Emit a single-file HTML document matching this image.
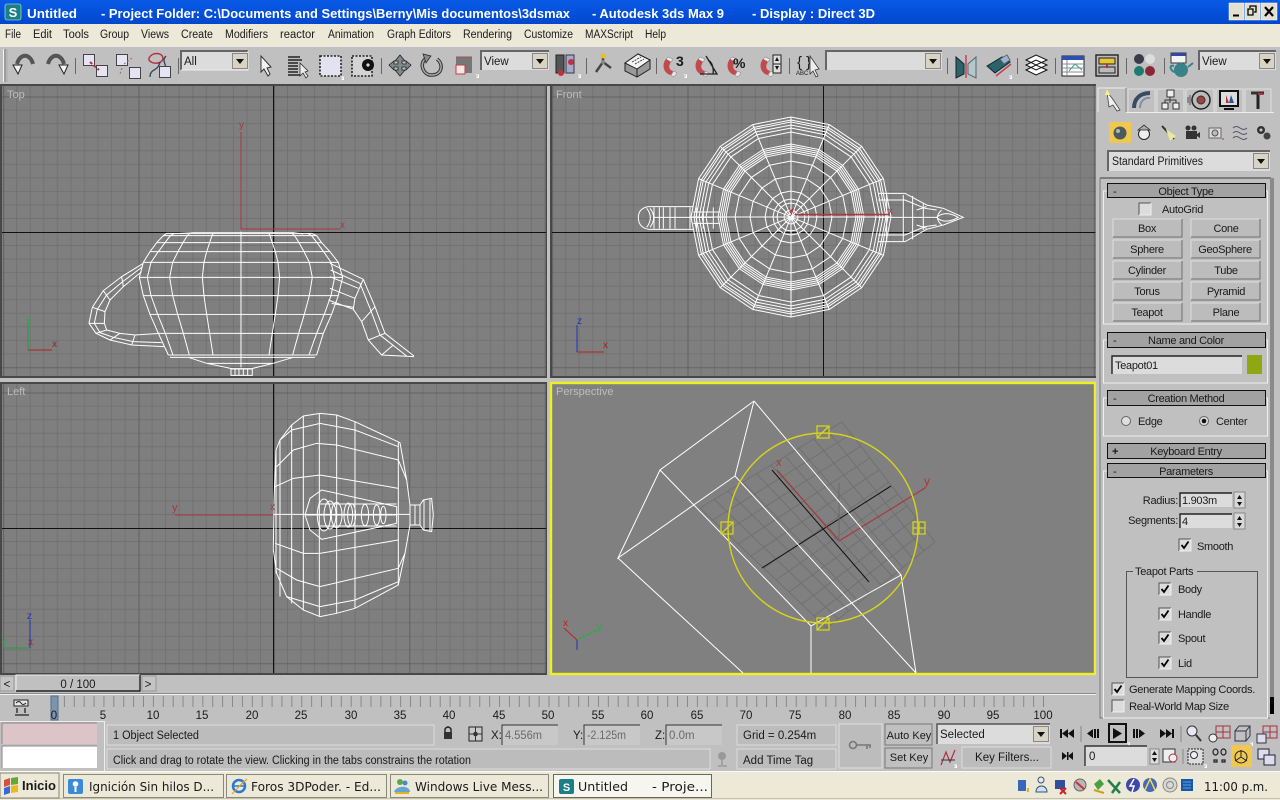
<!DOCTYPE html>
<html><head><meta charset="utf-8"><title>Untitled - 3ds Max 9</title>
<style>
html,body{margin:0;padding:0;width:1280px;height:800px;overflow:hidden;background:#c0c0c0}
svg{display:block}
text{font-family:"Liberation Sans",sans-serif;font-size:11.5px;fill:#1a1a1a}
.m{text-anchor:middle}
.e{text-anchor:end}
.w{fill:none;stroke:#fff;stroke-width:3}
.w1{fill:none;stroke:#fff;stroke-width:1}
.ns{vector-effect:non-scaling-stroke;fill:none;stroke:#fff;stroke-width:1}
.t{fill:#fff;font-weight:bold;font-size:13px}
.vl{fill:#bdbdbd;font-size:11px}
.g{fill:#6a6a6a}
.tb{font-family:"DejaVu Sans",sans-serif;font-size:12px}
.ic{fill:none;stroke:#222;stroke-width:1}
.pn text{font-size:11px;letter-spacing:-.3px}
</style></head><body>
<svg width="1280" height="800" viewBox="0 0 1280 800" xmlns="http://www.w3.org/2000/svg">
<defs>
<linearGradient id="tbar" x1="0" y1="0" x2="0" y2="1"><stop offset="0" stop-color="#0a5ae6"/><stop offset=".5" stop-color="#0450dc"/><stop offset="1" stop-color="#0348cc"/></linearGradient>
<pattern id="grid" patternUnits="userSpaceOnUse" width="135.4" height="135.4">
<path d="M13.5 0V136M27 0V136M40.6 0V136M54.2 0V136M67.7 0V136M81.2 0V136M94.8 0V136M108.3 0V136M121.9 0V136M0 13.5H136M0 27H136M0 40.6H136M0 54.2H136M0 67.7H136M0 81.2H136M0 94.8H136M0 108.3H136M0 121.9H136" stroke="#727272" fill="none" stroke-width="1"/>
<path d="M0 0V136M0 0H136" stroke="#5a5a5a" fill="none" stroke-width="1.600"/>
</pattern>
<pattern id="ticks" patternUnits="userSpaceOnUse" x="54" y="696" width="9.89" height="12"><path d="M.5 0V11" stroke="#888" stroke-width="1"/></pattern>
<polygon id="p16" class="ns" points="1,0 .924,.383 .707,.707 .383,.924 0,1 -.383,.924 -.707,.707 -.924,.383 -1,0 -.924,-.383 -.707,-.707 -.383,-.924 0,-1 .383,-.924 .707,-.707 .924,-.383"/>
<g id="arrow"><rect x=".5" y=".5" width="15" height="15" fill="#d8d4c4" stroke="#888"/><path d="M4 6H12L8 11Z" fill="#111"/></g>
<g id="pbtn"><rect width="69" height="18" fill="#bcbcbc"/><path d="M0 18V0H69" fill="none" stroke="#dedede"/><path d="M69 0V18H0" fill="none" stroke="#6e6e6e"/></g>
<g id="chk"><rect width="12" height="12" fill="#dcdcdc"/><path d="M0 12V0H12" fill="none" stroke="#555"/><path d="M12 0V12H0" fill="none" stroke="#f0f0f0"/></g>
<g id="chk2"><use href="#chk"/><path d="M2.5 6L5 9L9.5 2.5" fill="none" stroke="#000" stroke-width="1.8"/></g>
<g id="mag"><path d="M3 2C-2 8 1 17 8 18L10 14C6 13 5 9 8 5Z" fill="#c2494e"/><path d="M8 18L11 14L14 16L11 20Z" fill="#e8e8e8" stroke="#777" stroke-width=".5"/><path d="M3 2L8 5L10 2L5 0Z" fill="#e8e8e8" stroke="#777" stroke-width=".5"/></g>
<g id="sq"><rect x=".5" y=".5" width="11" height="11" fill="#e4e4f4" stroke="#444"/></g>
<g id="dot"><path d="M0 0L3 0 M0 0" stroke="#fff"/><path d="M0 3H3V0Z" fill="#fff"/></g>
</defs>

<!-- base -->
<rect width="1280" height="800" fill="#c0c0c0"/>
<!-- title -->
<rect width="1280" height="24" fill="url(#tbar)"/>
<rect x="5" y="4" width="16" height="16" rx="2" fill="#1d7f86" stroke="#bfe" stroke-width=".6"/>
<text x="13" y="17" class="m" style="fill:#fff;font-weight:bold;font-size:13px">S</text>
<text x="27" y="18" class="t" textLength="50" lengthAdjust="spacingAndGlyphs">Untitled</text>
<text x="101" y="18" class="t" textLength="469" lengthAdjust="spacingAndGlyphs">- Project Folder: C:\Documents and Settings\Berny\Mis documentos\3dsmax</text>
<text x="592" y="18" class="t" textLength="132" lengthAdjust="spacingAndGlyphs">- Autodesk 3ds Max 9</text>
<text x="752" y="18" class="t" textLength="123" lengthAdjust="spacingAndGlyphs">- Display : Direct 3D</text>
<g stroke="#fff" stroke-width=".5">
<rect x="1229" y="3" width="15" height="17" fill="#e4e0d0"/><rect x="1245" y="3" width="15" height="17" fill="#e4e0d0"/><rect x="1261" y="3" width="16" height="17" fill="#e4e0d0"/></g>
<path d="M1233 15.5H1239" stroke="#000" stroke-width="2"/>
<path d="M1250 8V6H1256V12H1254M1248 9H1253V15H1248Z" fill="none" stroke="#000" stroke-width="1.3"/>
<path d="M1265 7L1273 16M1273 7L1265 16" stroke="#000" stroke-width="2.2"/>

<!-- menu -->
<rect y="24" width="1280" height="22" fill="#ece9d8"/>
<g style="font-size:11px">
<text x="5" y="38" textLength="16" lengthAdjust="spacingAndGlyphs">File</text>
<text x="33" y="38" textLength="19" lengthAdjust="spacingAndGlyphs">Edit</text>
<text x="63" y="38" textLength="26" lengthAdjust="spacingAndGlyphs">Tools</text>
<text x="100" y="38" textLength="29" lengthAdjust="spacingAndGlyphs">Group</text>
<text x="141" y="38" textLength="28" lengthAdjust="spacingAndGlyphs">Views</text>
<text x="181" y="38" textLength="32" lengthAdjust="spacingAndGlyphs">Create</text>
<text x="225" y="38" textLength="43" lengthAdjust="spacingAndGlyphs">Modifiers</text>
<text x="280" y="38" textLength="35" lengthAdjust="spacingAndGlyphs">reactor</text>
<text x="328" y="38" textLength="46" lengthAdjust="spacingAndGlyphs">Animation</text>
<text x="387" y="38" textLength="64" lengthAdjust="spacingAndGlyphs">Graph Editors</text>
<text x="463" y="38" textLength="49" lengthAdjust="spacingAndGlyphs">Rendering</text>
<text x="524" y="38" textLength="49" lengthAdjust="spacingAndGlyphs">Customize</text>
<text x="585" y="38" textLength="48" lengthAdjust="spacingAndGlyphs">MAXScript</text>
<text x="645" y="38" textLength="21" lengthAdjust="spacingAndGlyphs">Help</text>
</g>

<!-- toolbar -->
<rect y="46" width="1280" height="38" fill="#c0c0c0"/>
<path d="M0 46.5H1280" stroke="#e8e8e8"/>
<path d="M3.5 49V82" stroke="#f4f4f4" stroke-width="1"/><path d="M5 49V82" stroke="#777"/>
<path d="M7 49V82" stroke="#aaa"/>
<path d="M75.5 58V74M178.5 58V74M381.5 58V74M586.5 58V74M656.5 58V74M789.5 58V74M947.5 58V74M1017.5 58V74M1055.5 58V74M1126.5 58V74M1164.5 58V74" stroke="#666"/>
<!-- undo/redo -->
<path d="M17 64C20 53 30 53 33 64" fill="none" stroke="#555" stroke-width="4"/>
<path d="M13 65L22 65L18 74Z" fill="#f4f4f4" stroke="#222"/>
<path d="M48 64C51 53 61 53 64 64" fill="none" stroke="#555" stroke-width="4"/>
<path d="M59 65L68 65L64 74Z" fill="#f4f4f4" stroke="#222"/>
<!-- link -->
<use href="#sq" x="83" y="54"/><use href="#sq" x="96" y="65"/><path d="M90 62L99 70" stroke="#b03040" stroke-width="2" stroke-dasharray="3 2"/>
<use href="#sq" x="116" y="54"/><use href="#sq" x="129" y="67"/><path d="M124 64L132 58M122 68L120 74" stroke="#b06070" stroke-dasharray="2 2"/>
<path d="M149 58C152 52 162 52 163 58C163 64 152 65 149 60Z" fill="none" stroke="#b03040" stroke-width="1.4"/>
<path d="M150 77C150 68 158 72 160 62M166 56C160 62 170 66 164 74" fill="none" stroke="#345" stroke-width="1.3"/>
<use href="#sq" x="159" y="66"/>
<!-- combo All -->
<rect x="181" y="51" width="67" height="19" fill="#dcdcdc"/><path d="M181 70V51H248" fill="none" stroke="#666" stroke-width="2"/><path d="M248 51V70H181" fill="none" stroke="#eee"/>
<use href="#arrow" x="232" y="53"/><text x="184" y="65">All</text>
<!-- select icons -->
<path d="M261 56L261 72L264 69L268 76L270 74L267 68L271 67Z" fill="#f4f4f4" stroke="#333"/>
<path d="M288 57H300M288 60H302M288 63H298M288 66H298M288 69H298M288 72H298M288 75H300" stroke="#222" stroke-width="1.5"/>
<path d="M300 63L300 76L303 73L306 78L308 76L305 72L308 71Z" fill="#eee" stroke="#333" stroke-width=".8"/>
<rect x="320" y="56" width="21" height="20" fill="#e2e2f0" stroke="#222" stroke-width="1.6" stroke-dasharray="2 1.5"/>
<rect x="352" y="56" width="20" height="20" fill="#d4d4d4" stroke="#222" stroke-width="1.6" stroke-dasharray="2 1.5"/>
<circle cx="368" cy="65" r="6" fill="#111"/><circle cx="368" cy="65" r="1.6" fill="#ddd"/>
<use href="#dot" x="341" y="77"/>
<!-- move -->
<path d="M400 55L405 61H402V63.500L403 64H406V61L411 65L406 70V67H402V70H405L400 76L395 70H398V67H394V70L389 65L394 61V64H398V61H395Z" fill="#7d8a8d" stroke="#222" stroke-width=".8"/>
<!-- rotate -->
<path d="M427 58C418 62 423 76 432 75C442 75 444 64 437 59" fill="none" stroke="#333" stroke-width="3.5"/>
<path d="M427 58C418 62 423 76 432 75C442 75 444 64 437 59" fill="none" stroke="#aaa" stroke-width="1.5"/>
<path d="M423 54L431 56L426 63Z" fill="#888" stroke="#222" stroke-width=".7"/>
<!-- scale -->
<rect x="456" y="57" width="16" height="16" fill="#777"/><rect x="456" y="65" width="9" height="9" fill="#f4e4e4" stroke="#c04040"/>
<path d="M456 57H472" stroke="#aa5050"/>
<use href="#dot" x="476" y="75"/>
<!-- combo view -->
<rect x="481" y="51" width="68" height="19" fill="#dcdcdc"/><path d="M481 70V51H549" fill="none" stroke="#666" stroke-width="2"/><use href="#arrow" x="532" y="53"/>
<text x="484" y="65">View</text>
<!-- pivot -->
<rect x="556" y="55" width="8" height="18" fill="#555" stroke="#222"/><rect x="566" y="55" width="8" height="18" fill="#a8a8c8" stroke="#335"/>
<circle cx="561" cy="73" r="3" fill="#c03040"/><circle cx="571" cy="62" r="3" fill="#c03040"/>
<use href="#dot" x="578" y="75"/>
<!-- manipulate -->
<path d="M603 54V62M603 62L596 72M603 62L611 68" stroke="#444" stroke-width="2.4" fill="none"/>
<circle cx="603" cy="56" r="2.4" fill="#e8c020"/><circle cx="603" cy="62" r="2" fill="#888"/>
<!-- keyboard -->
<path d="M625 63L638 54L650 60L650 69L637 77L625 71Z" fill="#999" stroke="#222"/><path d="M625 63L637 69L650 60L638 54Z" fill="#f4f4f4" stroke="#222"/><path d="M637 69V77" stroke="#222"/>
<path d="M632 62L641 57M635 64L644 59" stroke="#444" stroke-dasharray="2 1"/>
<!-- snaps -->
<use href="#mag" x="663" y="57"/><text x="676" y="66" style="font-size:14px;font-weight:bold">3</text><use href="#dot" x="684" y="75"/>
<use href="#mag" x="695" y="57"/><path d="M700 74H717L706 56M708 60C712 62 714 68 713 74" fill="none" stroke="#222" stroke-width="1.3"/>
<use href="#mag" x="727" y="57"/><text x="733" y="68" style="font-size:14px;font-weight:bold">%</text>
<use href="#mag" x="760" y="57"/><rect x="773" y="55" width="8" height="9" fill="#ddd" stroke="#222"/><rect x="773" y="64" width="8" height="9" fill="#ddd" stroke="#222"/><path d="M775 61L777 57L779 61ZM775 66H779L777 70Z" fill="#111"/>
<text x="797" y="67" style="font-size:15px">{ }</text><text x="796" y="75" style="font-size:6px">ABC</text>
<path d="M810 56L810 74L813 71L816 77L818 76L815 70L819 69Z" fill="#eee" stroke="#333" stroke-width=".8"/>
<rect x="826" y="51" width="116" height="19" fill="#dcdcdc"/><path d="M826 70V51H942" fill="none" stroke="#666" stroke-width="2"/><use href="#arrow" x="925" y="53"/>
<!-- mirror -->
<path d="M956 57L964 64V74L956 78Z" fill="#2a6468" stroke="#123"/><path d="M976 57L968 64V74L976 78Z" fill="#b4c8c8" stroke="#567"/><path d="M966 55V78" stroke="#c05050" stroke-width="1.6"/>
<!-- align -->
<path d="M987 66L1002 57L1010 62L995 73Z" fill="#2a6468" stroke="#123"/><path d="M1000 59L1007 55L1010 60L1004 64Z" fill="#a0b4d0" stroke="#567"/><path d="M996 76L1011 64" stroke="#c04050" stroke-width="1.5"/><use href="#dot" x="1009" y="76"/>
<!-- layers -->
<path d="M1026 60L1036 55L1047 60L1036 65ZM1026 65L1036 60L1047 65L1036 70ZM1026 70L1036 65L1047 70L1036 75Z" fill="#fff" stroke="#111"/>
<!-- track view -->
<rect x="1062" y="56" width="22" height="20" fill="#fff" stroke="#222"/><rect x="1062" y="56" width="22" height="4" fill="#3050b0"/><path d="M1067 60V76M1062 64H1084M1062 68H1084M1062 72H1084" stroke="#889"/><path d="M1069 71L1075 64L1082 70" stroke="#3a7" fill="none"/>
<!-- schematic -->
<rect x="1096" y="55" width="22" height="21" fill="#bbb" stroke="#222" stroke-width="1.4"/><rect x="1099" y="58" width="16" height="6" fill="#e8c830" stroke="#222"/><rect x="1099" y="67" width="16" height="6" fill="#bbb" stroke="#222"/><path d="M1107 64V68" stroke="#b03040" stroke-width="2"/>
<!-- materials -->
<circle cx="1139" cy="59" r="5" fill="#3a3a4a"/><circle cx="1150" cy="59" r="5" fill="#ddd"/><circle cx="1139" cy="71" r="5" fill="#1c7c70"/><circle cx="1150" cy="71" r="5" fill="#8a2838"/>
<!-- render -->
<rect x="1171" y="53" width="15" height="10" fill="#f2f2f2" stroke="#333"/><rect x="1171" y="53" width="15" height="3" fill="#3048a8"/>
<ellipse cx="1181" cy="70" rx="7" ry="7" fill="#38828a"/><path d="M1174 66C1168 64 1171 72 1175 72M1188 67L1193 63" fill="none" stroke="#38828a" stroke-width="2"/>
<rect x="1199" y="51" width="77" height="19" fill="#dcdcdc"/><path d="M1199 70V51H1276" fill="none" stroke="#666" stroke-width="2"/><use href="#arrow" x="1259" y="53"/>
<text x="1202" y="65">View</text>

<!-- viewports -->
<rect x="0" y="84" width="1098" height="2" fill="#444"/>
<rect x="0" y="84" width="547" height="294" fill="#484848"/>
<rect x="550" y="84" width="547" height="294" fill="#484848"/>
<rect x="0" y="382" width="547" height="293" fill="#484848"/>
<g transform="translate(274,232)"><rect x="-272" y="-146" width="544" height="290" fill="#7f7f7f"/><rect x="-272" y="-146" width="544" height="290" fill="url(#grid)"/></g>
<g transform="translate(823,232)"><rect x="-271" y="-146" width="544" height="290" fill="#7f7f7f"/><rect x="-271" y="-146" width="544" height="290" fill="url(#grid)"/></g>
<g transform="translate(274,528)"><rect x="-272" y="-144" width="544" height="289" fill="#7f7f7f"/><rect x="-272" y="-144" width="544" height="289" fill="url(#grid)"/></g>
<path d="M2 232.500H546M273.500 86V376M552 232.500H1095M823.500 86V376M2 528.500H546M273.500 384V673" stroke="#111" stroke-width="1"/>
<rect x="551" y="383" width="544" height="291" fill="#808080" stroke="#f0f020" stroke-width="2.4"/>
<text x="7" y="98" class="vl">Top</text><text x="556" y="98" class="vl">Front</text><text x="7" y="395" class="vl">Left</text><text x="556" y="395" class="vl">Perspective</text>

<!-- Top view axes -->
<path d="M241 229V132M241 229H340" stroke="#a83840" fill="none"/>
<text x="239" y="128" style="fill:#a83840;font-size:10px">y</text><text x="340" y="228" style="fill:#a83840;font-size:10px">x</text>
<path d="M28 350H52" stroke="#b02020"/><path d="M28 350V322" stroke="#20a040"/><path d="M28 350V350" stroke="#2030c0"/>
<text x="52" y="347" style="fill:#a02020;font-size:10px">x</text><text x="26" y="322" style="fill:#20b040;font-size:10px">y</text>

<!-- Top teapot -->
<g transform="translate(60,220) scale(.3333)">
<path class="w" d="M320 40L310 47L290 68L270 95L250 127L238 172L250 227L270 283L295 340L325 405M755 40L770 47L785 68L810 95L835 127L848 172L835 227L815 283L790 340L770 405"/>
<path class="w" d="M320 40H755M310 47H770M290 68H785M270 95H810M250 127H835M238 172H848M250 227H835M270 283H815M295 340H790M325 405H770M330 412H765"/>
<path class="w" d="M543 35V442M460 40L456 47L449 68L440 95L432 127L427 172L432 227L440 283L449 340L459 405M626 40L630 47L637 68L646 95L654 127L659 172L654 227L646 283L637 340L627 405M390 40L382 47L369 68L354 95L338 127L329 172L338 227L353 283L370 340L388 405M696 40L704 47L717 68L732 95L748 127L757 172L748 227L733 283L716 340L698 405M343 40L331 47L315 68L295 95L273 127L262 172L273 227L293 283L316 340L339 405M743 40L755 47L771 68L791 95L813 127L824 172L813 227L793 283L770 340L747 405"/>
<path class="w" d="M385 412L440 430L515 446H575L640 430L700 412M440 430H640M360 40L400 38H700L730 42"/>
<path class="w" d="M513 447H577V466H513ZM525 447V466M537 447V466M550 447V466M563 447V466"/>
<path class="w" d="M250 130L185 170L130 212L97 262L87 310L108 340L150 360L215 375L312 380M248 140L188 185L140 225L112 268L103 310L120 338L160 352L220 365L305 368M245 155L190 200L150 240L135 275L133 310L140 330L180 340L225 345L300 340M185 170L190 200M130 212L150 240M97 262L135 275M87 310H133M108 340L140 330M150 360L180 340M215 375L225 345"/>
<path class="w" d="M810 130L910 178L945 260L975 340L1062 408M812 150L900 190L930 265L960 345L1040 408M810 170L895 205M810 205L885 235M805 240L880 268L905 305L925 360L965 405L1062 410M910 178L885 235L880 268M945 260L905 305M975 340L925 360M815 250L880 262M1000 375L965 405"/>
</g>

<!-- Front axes + teapot -->
<g>
<use href="#p16" transform="translate(791,217) scale(100)"/>
<use href="#p16" transform="translate(791,217) scale(97)"/>
<use href="#p16" transform="translate(791,217) scale(95)"/>
<use href="#p16" transform="translate(791,217) scale(92)"/>
<use href="#p16" transform="translate(791,217) scale(89)"/>
<use href="#p16" transform="translate(791,217) scale(85)"/>
<use href="#p16" transform="translate(791,217) scale(73)"/>
<use href="#p16" transform="translate(791,217) scale(71)"/>
<use href="#p16" transform="translate(791,217) scale(69)"/>
<use href="#p16" transform="translate(791,217) scale(67)"/>
<use href="#p16" transform="translate(791,217) scale(65)"/>
<use href="#p16" transform="translate(791,217) scale(56)"/>
<use href="#p16" transform="translate(791,217) scale(41)"/>
<use href="#p16" transform="translate(791,217) scale(26)"/>
<use href="#p16" transform="translate(791,217) scale(18)"/>
<use href="#p16" transform="translate(791,217) scale(14)"/>
<use href="#p16" transform="translate(791,217) scale(7)"/>
<path class="ns" transform="translate(791,217) scale(100)" d="M-1 0L1 0M-.924 -.383L.924 .383M-.707 -.707L.707 .707M-.383 -.924L.383 .924M0 -1L0 1M.383 -.924L-.383 .924M.707 -.707L-.707 .707M.924 -.383L-.924 .383"/>
</g>
<g transform="translate(630,110) scale(.3333)">
<path class="w" d="M190 290H55Q25 295 25 323Q25 352 55 358H190M50 295Q72 323 50 352M60 295Q82 323 60 352M72 292V356M88 292V356M100 292V356M120 292V356M135 292V356M180 292V356M200 292V356M220 292V356M250 292V356M190 306H270M190 340H270M70 322H250"/>
<path class="w" d="M745 250H825L890 285L940 295L1000 322L940 345L890 358L825 395H745M770 252V395M745 270H825L885 295L920 300M745 375H825L885 350L920 345M820 255V393M848 258V388M880 280V360M920 322Q945 300 985 322Q945 345 920 322M935 300Q910 322 935 345M745 322H920M860 300L890 290M860 345L890 355"/>
</g>
<path d="M795 214.500H890M793 209L790 212" stroke="#b03840" stroke-width="1.6" fill="none"/>
<text x="888" y="214" style="fill:#b03840;font-size:10px">x</text>
<text x="789" y="214" style="fill:#b03840;font-size:10px">y</text>
<path d="M577 352H604" stroke="#b02020"/><path d="M577 352V325" stroke="#2030c0"/>
<text x="603" y="348" style="fill:#a02020;font-size:10px">x</text><text x="577" y="324" style="fill:#2030c0;font-size:10px">z</text>

<!-- Left view -->
<path d="M175 515H274" stroke="#a83840"/>
<text x="172" y="511" style="fill:#a83840;font-size:11px">y</text>
<g transform="translate(250,400) scale(.3333)">
<path class="w" d="M210 40L160 48L125 75L90 120L78 150L72 300L70 450L80 520L110 590L160 630L210 650L260 640L315 625L445 555L465 460L480 375V315L470 240L450 128L315 65L260 45L210 40"/>
<path class="w" d="M90 120V590M125 75V610M160 48V630M208 40V650M260 45V640M315 65V625M445 128V555M78 150V520"/>
<path class="w" d="M80 200L130 150L200 130L260 135L445 180M75 260L130 235L210 225L445 265M70 343H480M75 430L160 460H210L445 420M80 505L140 540L210 560L445 505M90 120L125 90L210 70L315 90L445 140M110 590L210 620L315 600L445 545"/>
<path class="w" d="M445 180L470 240M445 505L465 460"/>
<path class="w" d="M480 315H510L520 300L545 295L550 345L545 395L520 390L510 375H480M495 315V375M510 315V375M522 300V390M540 295V395"/>
<path class="w" d="M165 345L180 295L215 270L440 320V370L215 418L180 390L165 345M165 345H440M205 312H440M205 378H440"/>
<ellipse class="w" cx="222" cy="345" rx="20" ry="48"/><ellipse class="w" cx="240" cy="345" rx="18" ry="42"/><ellipse class="w" cx="260" cy="345" rx="16" ry="38"/><ellipse class="w" cx="295" cy="345" rx="13" ry="36"/><ellipse class="w" cx="305" cy="345" rx="12" ry="34"/><ellipse class="w" cx="345" cy="345" rx="11" ry="32"/><ellipse class="w" cx="380" cy="345" rx="10" ry="30"/><ellipse class="w" cx="400" cy="345" rx="8" ry="26"/>
</g>
<text x="270" y="510" style="fill:#a83840;font-size:10px">x</text>
<path d="M5 648H30M30 648V620" stroke="#2030c0" fill="none"/><path d="M30 648H5" stroke="#20a040"/><path d="M30 648V622" stroke="#2030c0"/>
<text x="2" y="645" style="fill:#20b040;font-size:10px">y</text><text x="27" y="619" style="fill:#2030c0;font-size:10px">z</text><text x="28" y="645" style="fill:#a02020;font-size:10px">x</text>

<!-- Perspective -->
<path d="M700 508L827 628M714 499L838 619M728 491L849 611M743 482L859 602M757 474L870 594M771 465L881 585M785 456L892 576M799 448L903 568M814 439L913 559M828 431L924 551M842 422L935 542M700 508L842 422M713 520L851 434M725 532L861 446M738 544L870 458M751 556L879 470M764 568L889 482M776 580L898 494M789 592L907 506M802 604L916 518M814 616L926 530M827 628L935 542" fill="none" stroke="#707070" stroke-width="1"/>
<path d="M772 470L869 582M762 568L891 486" stroke="#111" stroke-width="1"/>
<path d="M839 541L777 470M839 541L925 488" stroke="#a83840" stroke-width="1.2"/><path d="M839 541V483" stroke="#6a6a6a"/>
<text x="776" y="466" style="fill:#a83840;font-size:11px">x</text><text x="924" y="485" style="fill:#a83840;font-size:12px">y</text>
<path d="M754 401L660 470L618 558L735 476L754 401M754 401L901 575L811 626L660 470M735 476L916 673M618 558L743 673M901 575L916 673M811 626V673" class="w1"/>
<circle cx="823" cy="528" r="95" fill="none" stroke="#d4d41c" stroke-width="1.4"/>
<g fill="none" stroke="#d4d41c" stroke-width="1.3">
<rect x="817" y="426" width="12" height="12"/><path d="M817 438L829 426"/>
<rect x="721" y="522" width="12" height="12"/><path d="M721 534L733 522"/>
<rect x="913" y="522" width="12" height="12"/><path d="M919 522V534M913 528H925"/>
<rect x="817" y="618" width="12" height="12"/><path d="M817 630L829 618"/>
</g>
<path d="M577 640L564 628" stroke="#c02020"/><path d="M577 640L597 630" stroke="#20b040"/><path d="M577 640V650" stroke="#2030c0"/>
<text x="563" y="626" style="fill:#c02020;font-size:10px">x</text><text x="597" y="630" style="fill:#20b040;font-size:10px">y</text>

<!-- Command panel -->
<rect x="1096" y="84" width="184" height="640" fill="#c0c0c0"/>
<g fill="#c0c0c0" stroke-width="1">
<path d="M1098 112V88H1126V112" stroke="#eee"/><path d="M1126 88V112" stroke="#888"/>
<path d="M1128 112V89H1155V112" stroke="#e0e0e0"/><path d="M1157 112V89H1184V112" stroke="#e0e0e0"/><path d="M1186 112V89H1214V112" stroke="#e0e0e0"/><path d="M1216 112V89H1243V112" stroke="#e0e0e0"/><path d="M1245 112V89H1271V112" stroke="#e0e0e0"/>
</g>
<path d="M1126 112.500H1274" stroke="#eee"/>
<path d="M1107 92L1112 98L1120 110L1117 111L1113 105L1109 107Z" fill="#f0f0f0" stroke="#444" stroke-width=".8"/><path d="M1107 89L1110 95L1105 95Z" fill="#f8f080"/>
<path d="M1134 108C1134 98 1141 93 1150 93" fill="none" stroke="#3a4a60" stroke-width="4"/><path d="M1140 108C1140 101 1145 97 1150 98" fill="none" stroke="#8090a0" stroke-width="2"/>
<rect x="1167" y="90" width="7" height="7" fill="#eee" stroke="#333"/><rect x="1162" y="103" width="6" height="6" fill="#eee" stroke="#333"/><rect x="1173" y="103" width="6" height="6" fill="#eee" stroke="#333"/><path d="M1170 97V103M1165 103V100H1176V103" fill="none" stroke="#333"/>
<circle cx="1201" cy="100" r="9" fill="#bbb" stroke="#222" stroke-width="1.5"/><circle cx="1201" cy="100" r="4" fill="#a04040" stroke="#333"/><path d="M1190 95V105M1188 97V103" stroke="#555"/>
<rect x="1220" y="91" width="18" height="15" fill="#ddd" stroke="#111" stroke-width="2"/><path d="M1226 103V95L1229 103Z" fill="#b03040"/><path d="M1229 103L1231 95L1234 103Z" fill="#3050a0"/><path d="M1224 109H1234" stroke="#111" stroke-width="2"/>
<path d="M1251 93H1264" stroke="#333" stroke-width="3"/><path d="M1258 94V109" stroke="#222" stroke-width="3"/><path d="M1258 94H1263" stroke="#b03040" stroke-width="2"/>

<rect x="1109" y="122" width="22" height="21" fill="#f0c850"/>
<circle cx="1120" cy="133" r="6.500" fill="#4c5a5c"/><circle cx="1118" cy="131" r="2" fill="#b0b8b8"/>
<circle cx="1144" cy="134" r="5.500" fill="#eee" stroke="#222"/><path d="M1138 130L1144 125L1150 130Z" fill="#aaa" stroke="#222" stroke-width=".7"/>
<path d="M1162 126L1174 139" stroke="#333" stroke-width="2"/><path d="M1166 129L1176 136L1170 141Z" fill="#e8e8a0"/>
<path d="M1186 131H1197V139H1186ZM1197 134L1200 132V138L1197 136" fill="#333"/><circle cx="1188" cy="128" r="2.500" fill="#333"/><circle cx="1194" cy="128" r="2.500" fill="#333"/>
<rect x="1209" y="128" width="12" height="10" fill="#ddd" stroke="#666"/><circle cx="1215" cy="133" r="3" fill="#bbb" stroke="#555"/><path d="M1222 139H1224" stroke="#a04040"/>
<path d="M1233 128Q1236 125 1240 128T1247 128M1233 133Q1236 130 1240 133T1247 133M1233 138Q1236 135 1240 138T1247 138" stroke="#556" fill="none"/>
<circle cx="1261" cy="130" r="4" fill="#333"/><circle cx="1267" cy="136" r="3.500" fill="#444"/><circle cx="1261" cy="130" r="1.500" fill="#ccc"/>

<rect x="1108" y="151" width="162" height="20" fill="#dcdcdc"/><path d="M1108 171V151H1270" fill="none" stroke="#666" stroke-width="2"/>
<use href="#arrow" x="1253" y="153"/>
<text x="1112" y="165" textLength="91" lengthAdjust="spacingAndGlyphs">Standard Primitives</text>

<!-- rollouts -->
<path d="M1100 178H1271" stroke="#666" stroke-width="1.400"/>
<rect x="1270" y="178" width="4" height="520" fill="#8a8a8a"/>
<rect x="1270" y="697" width="4" height="17" fill="#000"/>
<path d="M1100 178V718H1270" fill="none" stroke="#777"/>
<g fill="none" stroke="#f0f0f0">
<rect x="1103.500" y="191" width="164" height="133"/>
<rect x="1103.500" y="340" width="164" height="43"/>
<rect x="1103.500" y="398" width="164" height="38"/>
<rect x="1103.500" y="471" width="164" height="247"/>
</g>
<g fill="#a2a2a2" stroke="#111" stroke-width="1">
<rect x="1107.500" y="183.500" width="158" height="14"/>
<rect x="1107.500" y="332.500" width="158" height="15"/>
<rect x="1107.500" y="390.500" width="158" height="15"/>
<rect x="1107.500" y="443.500" width="158" height="15"/>
<rect x="1107.500" y="463.500" width="158" height="14"/>
</g>
<g class="pn">
<text x="1186" y="195" class="m">Object Type</text><text x="1113" y="195">-</text>
<text x="1186" y="344" class="m">Name and Color</text><text x="1113" y="344">-</text>
<text x="1186" y="402" class="m">Creation Method</text><text x="1113" y="402">-</text>
<text x="1186" y="455" class="m">Keyboard Entry</text><text x="1112" y="455" style="font-weight:bold">+</text>
<text x="1186" y="475" class="m">Parameters</text><text x="1113" y="475">-</text>

<use href="#chk" x="1139" y="203"/><text x="1162" y="213">AutoGrid</text>
<use href="#pbtn" x="1113" y="219"/><use href="#pbtn" x="1191" y="219"/>
<use href="#pbtn" x="1113" y="240"/><use href="#pbtn" x="1191" y="240"/>
<use href="#pbtn" x="1113" y="261"/><use href="#pbtn" x="1191" y="261"/>
<use href="#pbtn" x="1113" y="282"/><use href="#pbtn" x="1191" y="282"/>
<use href="#pbtn" x="1113" y="303"/><use href="#pbtn" x="1191" y="303"/>
<text x="1147" y="232" class="m">Box</text><text x="1226" y="232" class="m">Cone</text>
<text x="1147" y="253" class="m">Sphere</text><text x="1225" y="253" class="m">GeoSphere</text>
<text x="1147" y="274" class="m">Cylinder</text><text x="1226" y="274" class="m">Tube</text>
<text x="1147" y="295" class="m">Torus</text><text x="1226" y="295" class="m">Pyramid</text>
<text x="1147" y="316" class="m">Teapot</text><text x="1226" y="316" class="m">Plane</text>

<rect x="1112" y="356" width="130" height="18" fill="#dcdcdc"/><path d="M1112 374V356H1242" fill="none" stroke="#222" stroke-width="1.400"/>
<text x="1115" y="369">Teapot01</text>
<rect x="1247" y="355" width="15" height="19" fill="#8fa812"/>

<circle cx="1126" cy="421" r="4.500" fill="#dedede" stroke="#666"/><text x="1138" y="425">Edge</text>
<circle cx="1204" cy="421" r="4.500" fill="#dedede" stroke="#666"/><circle cx="1204" cy="421" r="2.300" fill="#111"/><text x="1216" y="425">Center</text>

<text x="1178" y="504" class="e">Radius:</text>
<rect x="1180" y="493" width="52" height="14" fill="#dcdcdc"/><path d="M1180 507V493H1232" fill="none" stroke="#222" stroke-width="1.400"/>
<text x="1182" y="504">1.903m</text>
<rect x="1234" y="492" width="11" height="16" fill="#d8d8d8" stroke="#888"/><path d="M1237 499L1239.500 495L1242 499ZM1237 502H1242L1239.500 506Z" fill="#111"/>
<text x="1178" y="524" class="e">Segments:</text>
<rect x="1180" y="514" width="52" height="14" fill="#dcdcdc"/><path d="M1180 528V514H1232" fill="none" stroke="#222" stroke-width="1.400"/>
<text x="1182" y="525">4</text>
<rect x="1234" y="513" width="11" height="16" fill="#d8d8d8" stroke="#888"/><path d="M1237 520L1239.500 516L1242 520ZM1237 523H1242L1239.500 527Z" fill="#111"/>
<use href="#chk2" x="1179" y="539"/><text x="1197" y="550">Smooth</text>
<rect x="1126.500" y="571.500" width="131" height="106" fill="none" stroke="#555"/>
<rect x="1133" y="565" width="64" height="12" fill="#c0c0c0"/><text x="1135" y="575">Teapot Parts</text>
<use href="#chk2" x="1159" y="583"/><text x="1178" y="593">Body</text>
<use href="#chk2" x="1159" y="608"/><text x="1178" y="618">Handle</text>
<use href="#chk2" x="1159" y="632"/><text x="1178" y="642">Spout</text>
<use href="#chk2" x="1159" y="657"/><text x="1178" y="667">Lid</text>
<use href="#chk2" x="1112" y="683"/><text x="1129" y="693" textLength="126" lengthAdjust="spacingAndGlyphs">Generate Mapping Coords.</text>
<use href="#chk" x="1112" y="700"/><text x="1129" y="710" textLength="100" lengthAdjust="spacingAndGlyphs">Real-World Map Size</text>
</g>

<!-- time scrollbar -->
<rect x="0" y="676" width="14" height="15" fill="#c4c4c4" stroke="#999"/><text x="7" y="688" class="m">&lt;</text>
<rect x="16" y="675" width="124" height="16" fill="#c0c0c0"/><path d="M16 691V675H140" stroke="#f0f0f0" fill="none"/><path d="M140 675V691H16" stroke="#222" fill="none" stroke-width="1.400"/>
<text x="78" y="688" class="m">0 / 100</text>
<rect x="142" y="676" width="14" height="15" fill="#c4c4c4" stroke="#999"/><text x="148" y="688" class="m">&gt;</text>

<!-- track -->
<path d="M0 694.500H1096" stroke="#f2f2f2"/><path d="M0 693.500H1096" stroke="#8a8a8a"/>
<rect x="54" y="696" width="990" height="12" fill="url(#ticks)"/>
<rect x="51" y="696" width="7" height="24" fill="#7c94ac" stroke="#50708c"/>
<rect x="14" y="700" width="14" height="6" fill="#e8e8e8" stroke="#222"/><path d="M16 703Q19 700 21 703T26 703" stroke="#222" fill="none"/><path d="M17 708V713M25 708V713M15 715H29" stroke="#222" stroke-width="1.300"/>
<g class="ruler" style="font-size:12px">
<text x="54" y="719" class="m">0</text><text x="103" y="719" class="m">5</text><text x="153" y="719" class="m">10</text><text x="202" y="719" class="m">15</text><text x="252" y="719" class="m">20</text><text x="301" y="719" class="m">25</text><text x="351" y="719" class="m">30</text><text x="400" y="719" class="m">35</text><text x="449" y="719" class="m">40</text><text x="499" y="719" class="m">45</text><text x="548" y="719" class="m">50</text><text x="598" y="719" class="m">55</text><text x="647" y="719" class="m">60</text><text x="697" y="719" class="m">65</text><text x="746" y="719" class="m">70</text><text x="795" y="719" class="m">75</text><text x="845" y="719" class="m">80</text><text x="894" y="719" class="m">85</text><text x="944" y="719" class="m">90</text><text x="993" y="719" class="m">95</text><text x="1043" y="719" class="m">100</text>
</g>

<!-- status -->
<path d="M0 721.500H104.500V772" fill="none" stroke="#eee"/>
<rect x="2" y="723" width="95" height="21" fill="#dcc4c8"/><path d="M2 744V723H97" fill="none" stroke="#888"/>
<rect x="2" y="746" width="95" height="22" fill="#fff"/><path d="M2 768V746H97" fill="none" stroke="#888"/>
<rect x="107" y="725" width="327" height="20" fill="#bcbcbc" stroke="#ddd"/>
<text x="113" y="739" textLength="86" lengthAdjust="spacingAndGlyphs">1 Object Selected</text>
<rect x="107" y="749" width="603" height="20" fill="#bcbcbc" stroke="#ddd"/>
<text x="113" y="764" textLength="358" lengthAdjust="spacingAndGlyphs">Click and drag to rotate the view.  Clicking in the tabs constrains the rotation</text>
<path d="M445 732V729Q448 725 451 729V732" fill="none" stroke="#222" stroke-width="1.400"/><rect x="444" y="732" width="8" height="7" fill="#333"/>
<rect x="469" y="727" width="13" height="14" fill="#c8c8c8" stroke="#222"/><circle cx="475.500" cy="734" r="2.300" fill="#333"/><path d="M475.500 727V741M469 734H482" stroke="#333"/>
<text x="491" y="739">X:</text>
<rect x="502" y="725" width="56" height="20" fill="#c8c8c8"/><path d="M502 745V725H558" fill="none" stroke="#333"/>
<text x="505" y="739" class="g" textLength="37" lengthAdjust="spacingAndGlyphs">4.556m</text>
<text x="573" y="739">Y:</text>
<rect x="584" y="725" width="56" height="20" fill="#c8c8c8"/><path d="M584 745V725H640" fill="none" stroke="#333"/>
<text x="587" y="739" class="g" textLength="39" lengthAdjust="spacingAndGlyphs">-2.125m</text>
<text x="655" y="739">Z:</text>
<rect x="666" y="725" width="56" height="20" fill="#c8c8c8"/><path d="M666 745V725H722" fill="none" stroke="#333"/>
<text x="669" y="739" class="g">0.0m</text>
<rect x="737" y="725" width="99" height="20" fill="#bcbcbc" stroke="#ddd"/><text x="743" y="739">Grid = 0.254m</text>
<rect x="737" y="749" width="99" height="20" fill="#bcbcbc" stroke="#ddd"/><text x="743" y="764">Add Time Tag</text>
<circle cx="722" cy="756" r="4" fill="#999"/><path d="M722 760V765M718 766H727" stroke="#999" stroke-width="1.500"/>
<rect x="839" y="724" width="43" height="44" fill="#bcbcbc" stroke="#e0e0e0"/>
<circle cx="853" cy="745" r="3.500" fill="none" stroke="#777" stroke-width="1.600"/><path d="M857 745H871M867 745V749M870 745V748" stroke="#777" stroke-width="1.600"/>
<rect x="885" y="724" width="47" height="21" fill="#c0c0c0" stroke="#777"/><text x="909" y="739" class="m" style="font-size:11px">Auto Key</text>
<rect x="885" y="748" width="47" height="20" fill="#c0c0c0" stroke="#777"/><text x="909" y="761" class="m" style="font-size:11px">Set Key</text>
<rect x="937" y="724" width="113" height="20" fill="#dcdcdc"/><path d="M937 744V724H1050" fill="none" stroke="#555" stroke-width="1.500"/>
<use href="#arrow" x="1033" y="726"/><text x="940" y="738">Selected</text>
<path d="M941 765L946 752L950 762L955 750" fill="none" stroke="#b03040" stroke-width="1.200"/><path d="M941 760H955" stroke="#334"/><use href="#dot" x="954" y="765"/>
<rect x="962" y="747" width="89" height="21" fill="#bcbcbc" stroke="#ddd"/><text x="1007" y="761" class="m">Key Filters...</text>
<!-- playback -->
<g fill="#111">
<path d="M1060 729H1062V738H1060ZM1068 729V738L1062 733.500ZM1074 729V738L1068 733.500Z"/>
<path d="M1097 729V738L1091 733.500ZM1098 729H1100V738H1098ZM1101 729H1103V738H1101Z" transform="translate(-4,0)"/>
<path d="M1113 728L1122 733.500L1113 739Z"/>
<path d="M1133 729H1135V738H1133ZM1136 729H1138V738H1136ZM1139 729L1145 733.500L1139 738Z"/>
<path d="M1158 729L1164 733.500L1158 738ZM1164 729L1170 733.500L1164 738ZM1170 729H1172V738H1170Z" transform="translate(2,0)"/>
<path d="M1062 752L1067 756L1062 760ZM1073 752L1068 756L1073 760ZM1067 752H1068.500V760H1067Z"/>
</g>
<rect x="1109" y="724" width="17" height="18" fill="none" stroke="#111" stroke-width="2"/><use href="#dot" x="1127" y="743"/>
<path d="M1081 726V742M1181 726V742M1183 749V764" stroke="#888"/>
<circle cx="1192" cy="731" r="5" fill="#e8e8f4" stroke="#333"/><path d="M1196 735L1201 741" stroke="#333" stroke-width="2"/>
<rect x="1216" y="726" width="14" height="12" fill="none" stroke="#a83040"/><path d="M1223 726V738M1216 732H1230" stroke="#a83040"/><circle cx="1213" cy="738" r="4" fill="#eee" stroke="#333"/>
<path d="M1235 731H1246V741H1235ZM1235 731L1239 726H1250V736L1246 741M1246 731L1250 726" fill="none" stroke="#334"/><use href="#dot" x="1250" y="743"/>
<rect x="1263" y="726" width="14" height="12" fill="none" stroke="#a83040"/><path d="M1270 726V738M1263 732H1277" stroke="#a83040"/><path d="M1257 734H1266V743H1257Z" fill="#dde" stroke="#334"/>
<rect x="1085" y="746" width="62" height="20" fill="#dcdcdc"/><path d="M1085 766V746H1147" fill="none" stroke="#333" stroke-width="1.400"/>
<text x="1089" y="760">0</text>
<rect x="1150" y="749" width="9" height="15" fill="#ddd" stroke="#888"/><path d="M1152 755L1154.500 751L1157 755ZM1152 758H1157L1154.500 762Z" fill="#111"/>
<rect x="1163" y="749" width="12" height="13" fill="#eee" stroke="#333"/><circle cx="1173" cy="758" r="4" fill="#eee" stroke="#a83040"/>
<rect x="1188" y="749" width="15" height="15" fill="#ddd" stroke="#222" stroke-dasharray="2 1"/><circle cx="1194" cy="755" r="3.500" fill="#eef" stroke="#333"/><use href="#dot" x="1204" y="765"/>
<path d="M1213 752a2.500 3 0 1 0 5 0a2.500 3 0 1 0 -5 0M1221 752a2.500 3 0 1 0 5 0a2.500 3 0 1 0 -5 0M1214 760h3v2h-3zM1222 760h3v2h-3z" fill="none" stroke="#222" stroke-width="1.200"/>
<rect x="1231" y="745" width="21" height="22" fill="#f0c850"/><circle cx="1241" cy="757" r="6" fill="none" stroke="#223"/><path d="M1241 750V757L1235 761M1241 757L1247 761" fill="none" stroke="#223"/>
<rect x="1258" y="749" width="11" height="10" fill="#dde" stroke="#223"/><rect x="1264" y="755" width="11" height="10" fill="#dde" stroke="#223"/>

<!-- taskbar -->
<rect y="771" width="1280" height="29" fill="#ece9d8"/>
<path d="M0 771.500H1280" stroke="#fdfcf4"/>
<path d="M0 798.500H1280" stroke="#c4c0ac"/>
<rect x="0" y="773" width="59" height="25" fill="#ece9d8" stroke="#8a8878"/>
<path d="M4 780L10 778V785L4 787Z" fill="#d8503c"/><path d="M11 778L18 777V784L11 785Z" fill="#60a838"/><path d="M4 788L10 786V793L4 795Z" fill="#3868d0"/><path d="M11 786L18 785V792L11 793Z" fill="#f0b820"/>
<text x="22" y="790" style="font-weight:bold;font-size:12.500px" textLength="34" lengthAdjust="spacingAndGlyphs">Inicio</text>
<g fill="#ece9d8" stroke="#8a8878">
<rect x="63.500" y="774.500" width="160" height="23"/><rect x="226.500" y="774.500" width="160" height="23"/><rect x="390.500" y="774.500" width="158" height="23"/>
</g>
<rect x="553.500" y="774.500" width="158" height="23" fill="#f6f5ee" stroke="#6a6858"/>
<rect x="68" y="779" width="15" height="15" rx="2" fill="#3a8ad8"/><circle cx="75.500" cy="784" r="2.800" fill="#fff"/><path d="M75.500 787V792" stroke="#fff" stroke-width="2"/>
<text x="89" y="791" class="tb" textLength="125" lengthAdjust="spacingAndGlyphs">Ignición Sin hilos D...</text>
<circle cx="239" cy="786" r="6" fill="none" stroke="#2a78d0" stroke-width="2.500"/><path d="M233 786H245" stroke="#2a78d0" stroke-width="1.500"/><path d="M232 794C236 790 242 783 247 779" stroke="#e8a020" stroke-width="1.200" fill="none"/>
<text x="251" y="791" class="tb" textLength="130" lengthAdjust="spacingAndGlyphs">Foros 3DPoder. - Ed...</text>
<circle cx="400" cy="782" r="3" fill="#5aa84a"/><circle cx="405" cy="783" r="2.500" fill="#4a88d0"/><path d="M394 792C396 785 410 785 410 792Z" fill="#60a8d0"/><path d="M395 793H409" stroke="#e8b020" stroke-width="2"/>
<text x="415" y="791" class="tb" textLength="128" lengthAdjust="spacingAndGlyphs">Windows Live Mess...</text>
<rect x="559" y="779" width="15" height="15" rx="2" fill="#1d7f86"/><text x="566.500" y="791" class="m" style="fill:#fff;font-weight:bold;font-size:11px">S</text>
<text x="578" y="791" class="tb" textLength="50" lengthAdjust="spacingAndGlyphs">Untitled</text>
<text x="652" y="791" class="tb" textLength="56" lengthAdjust="spacingAndGlyphs">- Proje...</text>
<!-- tray -->
<rect x="1018" y="780" width="8" height="11" fill="#3a68b8"/><path d="M1028 788V792" stroke="#e0b020" stroke-width="2"/>
<circle cx="1041" cy="780" r="3" fill="#e8e8f4" stroke="#356"/><path d="M1036 792C1036 784 1047 784 1047 792Z" fill="#cfe0f4" stroke="#356"/>
<rect x="1055" y="780" width="10" height="9" fill="#334f9c"/><path d="M1060 788L1066 794M1066 788L1060 794" stroke="#d02020" stroke-width="2"/>
<circle cx="1080" cy="785" r="6" fill="#b8b8b8" stroke="#666"/><path d="M1076 782L1084 789" stroke="#d03030" stroke-width="2"/>
<path d="M1094 784L1100 779L1104 784L1098 790Z" fill="#48a040"/><path d="M1094 790L1104 793" stroke="#c8a020" stroke-width="2"/>
<path d="M1108 780L1120 793M1120 782L1112 793" stroke="#208048" stroke-width="2.500"/>
<circle cx="1133" cy="785" r="7" fill="#4048a8"/><path d="M1134 779L1130 786H1134L1132 792" stroke="#fff" stroke-width="1.500" fill="none"/>
<circle cx="1150" cy="785" r="7" fill="#4868b8"/><path d="M1145 790L1150 779L1155 790" stroke="#f0e050" stroke-width="1.500" fill="none"/>
<circle cx="1170" cy="785" r="7" fill="#d8d8d0" stroke="#888"/><circle cx="1170" cy="785" r="3.500" fill="none" stroke="#888"/>
<rect x="1181" y="779" width="12" height="12" fill="#1858a8"/><path d="M1183 782H1191M1183 785H1191M1183 788H1191" stroke="#60a0e0"/>
<text x="1204" y="791" class="tb" textLength="64" lengthAdjust="spacingAndGlyphs">11:00 p.m.</text>
</svg>
</body></html>
